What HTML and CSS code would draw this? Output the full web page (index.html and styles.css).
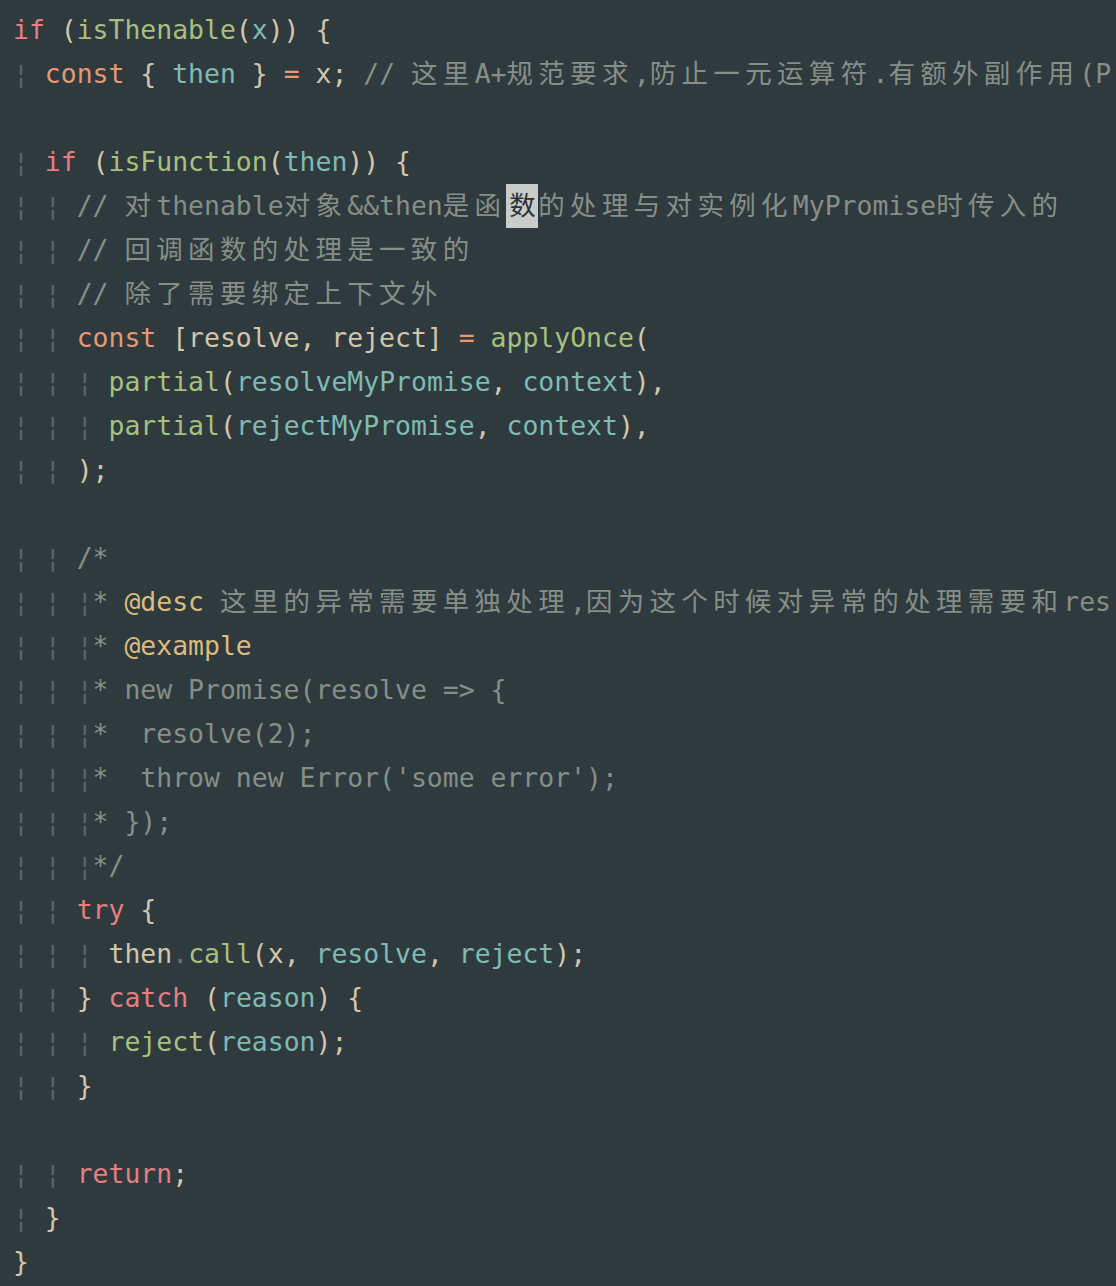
FILE: index.html
```html
<!DOCTYPE html>
<html lang="zh">
<head>
<meta charset="utf-8">
<title>MyPromise</title>
<link rel="stylesheet" href="styles.css">
</head>
<body>
<main class="code">
<div class="ln"><span class="k">if</span> (<span class="f">isThenable</span>(<span class="v">x</span>)) {</div>
<div class="ln"><span class="g">¦</span> <span class="o">const</span> { <span class="v">then</span> } <span class="o">=</span> x; <span class="c">// <span class="cj">这里</span>A+<span class="cj">规范要求</span>,<span class="cj">防止一元运算符</span>.<span class="cj">有额外副作用</span>(P</span></div>
<div class="ln"></div>
<div class="ln"><span class="g">¦</span> <span class="k">if</span> (<span class="f">isFunction</span>(<span class="v">then</span>)) {</div>
<div class="ln"><span class="g">¦</span> <span class="g">¦</span> <span class="c">// <span class="cj">对</span>thenable<span class="cj">对象</span>&amp;&amp;then<span class="cj">是函</span><span class="cur">数</span><span class="cj">的处理与对实例化</span>MyPromise<span class="cj">时传入的</span></span></div>
<div class="ln"><span class="g">¦</span> <span class="g">¦</span> <span class="c">// <span class="cj">回调函数的处理是一致的</span></span></div>
<div class="ln"><span class="g">¦</span> <span class="g">¦</span> <span class="c">// <span class="cj">除了需要绑定上下文外</span></span></div>
<div class="ln"><span class="g">¦</span> <span class="g">¦</span> <span class="o">const</span> [resolve, reject] <span class="o">=</span> <span class="f">applyOnce</span>(</div>
<div class="ln"><span class="g">¦</span> <span class="g">¦</span> <span class="g">¦</span> <span class="f">partial</span>(<span class="v">resolveMyPromise</span>, <span class="v">context</span>),</div>
<div class="ln"><span class="g">¦</span> <span class="g">¦</span> <span class="g">¦</span> <span class="f">partial</span>(<span class="v">rejectMyPromise</span>, <span class="v">context</span>),</div>
<div class="ln"><span class="g">¦</span> <span class="g">¦</span> );</div>
<div class="ln"></div>
<div class="ln"><span class="g">¦</span> <span class="g">¦</span> <span class="c">/*</span></div>
<div class="ln"><span class="g">¦</span> <span class="g">¦</span> <span class="g">¦</span><span class="c">* <span class="t">@desc</span> <span class="cj">这里的异常需要单独处理</span>,<span class="cj">因为这个时候对异常的处理需要和</span>res</span></div>
<div class="ln"><span class="g">¦</span> <span class="g">¦</span> <span class="g">¦</span><span class="c">* <span class="t">@example</span></span></div>
<div class="ln"><span class="g">¦</span> <span class="g">¦</span> <span class="g">¦</span><span class="c">* new Promise(resolve =&gt; {</span></div>
<div class="ln"><span class="g">¦</span> <span class="g">¦</span> <span class="g">¦</span><span class="c">*  resolve(2);</span></div>
<div class="ln"><span class="g">¦</span> <span class="g">¦</span> <span class="g">¦</span><span class="c">*  throw new Error('some error');</span></div>
<div class="ln"><span class="g">¦</span> <span class="g">¦</span> <span class="g">¦</span><span class="c">* });</span></div>
<div class="ln"><span class="g">¦</span> <span class="g">¦</span> <span class="g">¦</span><span class="c">*/</span></div>
<div class="ln"><span class="g">¦</span> <span class="g">¦</span> <span class="k">try</span> {</div>
<div class="ln"><span class="g">¦</span> <span class="g">¦</span> <span class="g">¦</span> then<span class="dot">.</span><span class="f">call</span>(x, <span class="v">resolve</span>, <span class="v">reject</span>);</div>
<div class="ln"><span class="g">¦</span> <span class="g">¦</span> } <span class="k">catch</span> (<span class="v">reason</span>) {</div>
<div class="ln"><span class="g">¦</span> <span class="g">¦</span> <span class="g">¦</span> <span class="f">reject</span>(<span class="v">reason</span>);</div>
<div class="ln"><span class="g">¦</span> <span class="g">¦</span> }</div>
<div class="ln"></div>
<div class="ln"><span class="g">¦</span> <span class="g">¦</span> <span class="k">return</span>;</div>
<div class="ln"><span class="g">¦</span> }</div>
<div class="ln">}</div>
</main>
</body>
</html>
```
FILE: styles.css
```css
html, body {
  margin: 0;
  padding: 0;
  background: #2f3a3e;
}

.code {
  display: flex;
  flex-direction: column;
  padding: 8px 0 0 13px;
  font-family: "DejaVu Sans Mono", "Noto Sans CJK SC", monospace;
  font-size: 26.45px;
  color: #d3c6aa;
  overflow: hidden;
  width: 1103px;
  height: 1278px;
}

.ln {
  height: 44px;
  line-height: 44px;
  white-space: pre;
  overflow: hidden;
}

.k { color: #e67e80; }
.o { color: #e69875; }
.f { color: #a7c080; }
.v { color: #7fbbb3; }
.c { color: #868f87; }
.t { color: #dbbc7f; }
.g { color: #5a6661; }
.dot { color: #68736d; }

.cj {
  letter-spacing: calc(2ch - 1em);
}

.cur {
  display: inline-block;
  width: 2ch;
  height: 44px;
  vertical-align: top;
  text-align: center;
  background: #c9cccb;
  color: #2b3336;
}
```
